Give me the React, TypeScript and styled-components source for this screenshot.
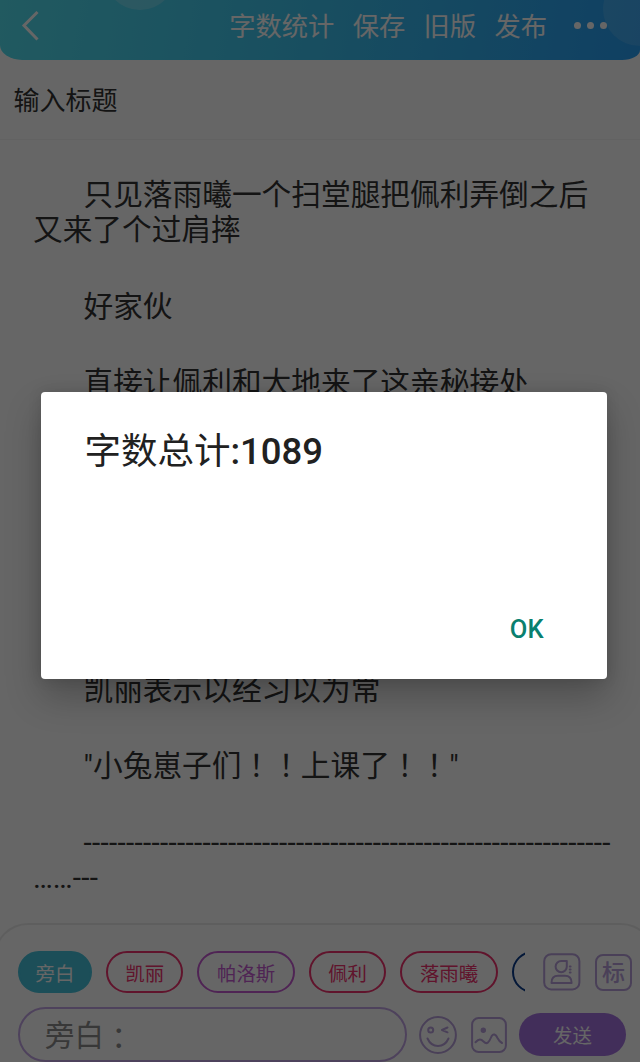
import React from "react";
import styled, { createGlobalStyle } from "styled-components";

const GlobalStyle = createGlobalStyle`
  * {
    box-sizing: border-box;
  }
  body {
    margin: 0;
    background-color: #666666;
    font-family: Roboto, "Noto Sans CJK SC", sans-serif;
  }
`;

const roles = [
  { name: "旁白", width: 74, color: "#46c2dc", active: true },
  { name: "凯丽", width: 77.4, color: "#f0326e" },
  { name: "帕洛斯", width: 97.5, color: "#c55ad2" },
  { name: "佩利", width: 77.4, color: "#f0326e" },
  { name: "落雨曦", width: 97.5, color: "#f0326e" },
  { name: "", width: 97.5, color: "#0a3c8c" },
];

const App = () => {
  return (
    <Screen>
      <GlobalStyle />
      <Header>
        <Bubble $left={104} $top={-62} $size={72} $opacity={0.2} />
        <Bubble $left={603} $top={-28} $size={74} $opacity={0.12} />
        <BackIcon viewBox="0 0 20 32">
          <path d="M16.5 2 L3 15.5 L16.5 29.5" />
        </BackIcon>
        <Menu>
          <span>字数统计</span>
          <span>保存</span>
          <span>旧版</span>
          <span>发布</span>
        </Menu>
        <Dots>
          <Dot />
          <Dot />
          <Dot />
        </Dots>
      </Header>
      <TitleRow>输入标题</TitleRow>
      <Article>
        <Paragraph>只见落雨曦一个扫堂腿把佩利弄倒之后又来了个过肩摔</Paragraph>
        <Paragraph>好家伙</Paragraph>
        <Paragraph>直接让佩利和大地来了这亲秘接处</Paragraph>
        <Paragraph />
        <Paragraph />
        <Paragraph />
        <Paragraph>凯丽表示以经习以为常</Paragraph>
        <Paragraph>
          "小兔崽子们<Wide>！！</Wide>上课了<Wide>！！</Wide>"
        </Paragraph>
        <Paragraph>
          <Dashes>{"-".repeat(62)}</Dashes>
          <br />
          ……<Dashes>---</Dashes>
        </Paragraph>
      </Article>
      <Panel>
        <RoleRow>
          <RoleList>
            {roles.map((role, index) => (
              <Role
                key={index}
                $width={role.width}
                $color={role.color}
                $active={role.active}
              >
                {role.name}
              </Role>
            ))}
          </RoleList>
          <PersonIcon viewBox="0 0 38 38">
            <rect x="1.2" y="1.2" width="35.2" height="35.2" rx="7" />
            <path d="M18.5 8 H23.8 V13.5 A5.6 5.6 0 1 1 18.5 8 Z" />
            <path d="M8.5 30 C8.3 25 11 22.8 15 22.8 H22 C26 22.8 28.8 25 28.6 30 Z" />
            <path d="M26.8 13.5 H27.6 M26.8 16.5 H27.6 M26.8 19.5 H27.6" />
          </PersonIcon>
          <MarkButton>标</MarkButton>
        </RoleRow>
        <InputRow>
          <Input>
            旁白<Wide>：</Wide>
          </Input>
          <FaceIcon viewBox="0 0 38 38">
            <circle cx="19" cy="19" r="17.9" />
            <circle cx="11.7" cy="14" r="2.5" />
            <path d="M28.5 11.5 L23 14 L28.5 16.3" />
            <path d="M8.5 22.5 C13 32.5 25 32.5 29.5 22.5" />
          </FaceIcon>
          <PictureIcon viewBox="0 0 36 36">
            <rect x="1.1" y="1.1" width="33.8" height="33.8" rx="6.5" />
            <circle className="sun" cx="12.3" cy="13.2" r="1.7" />
            <path d="M4.5 25.3 C8 21.5 10 22 12.5 24.5 C16 28 18 25.5 20 20.5 C22 15.5 25 17.5 26.5 21 C28 24 29 25 31 26" />
          </PictureIcon>
          <Send>发送</Send>
        </InputRow>
      </Panel>
      <Scrim>
        <Dialog>
          <DialogTitle>
            字数总计<Count>:1089</Count>
          </DialogTitle>
          <DialogButton>OK</DialogButton>
        </Dialog>
      </Scrim>
    </Screen>
  );
};

export default App;

const Screen = styled.div`
  position: relative;
  display: flex;
  flex-direction: column;
  width: 640px;
  height: 1062px;
  overflow: hidden;
  background-color: #ffffff;
`;

const Header = styled.div`
  position: relative;
  display: flex;
  align-items: center;
  flex: none;
  height: 59.5px;
  padding: 0 33px 8.5px 21px;
  overflow: hidden;
  border-radius: 0 0 18px 22px / 0 0 10px 15px;
  background: linear-gradient(100deg, #58e6f0 -10%, #3fc6f0 45%, #269cf6 105%);
`;

const Bubble = styled.div<{
  $left: number;
  $top: number;
  $size: number;
  $opacity: number;
}>`
  position: absolute;
  left: ${({ $left }) => $left}px;
  top: ${({ $top }) => $top}px;
  width: ${({ $size }) => $size}px;
  height: ${({ $size }) => $size}px;
  border-radius: 50%;
  background-color: rgba(255, 255, 255, ${({ $opacity }) => $opacity});
`;

const BackIcon = styled.svg`
  width: 20px;
  height: 32px;
  fill: none;
  stroke: #ffffff;
  stroke-width: 3;
`;

const Menu = styled.div`
  display: flex;
  gap: 18.3px;
  margin-left: auto;
  padding-top: 2px;
  font-size: 26.3px;
  line-height: 36px;
  color: #ffffff;
`;

const Dots = styled.div`
  display: flex;
  gap: 6px;
  margin-left: 27px;
`;

const Dot = styled.span`
  width: 7px;
  height: 7px;
  border-radius: 50%;
  background-color: #ffffff;
`;

const TitleRow = styled.div`
  display: flex;
  align-items: center;
  flex: none;
  height: 80.5px;
  padding: 0 0 2px 13.5px;
  border-bottom: 1px solid #f5f5f5;
  font-size: 26px;
  color: #333333;
`;

const Article = styled.div`
  height: 783px;
  flex: none;
  padding: 38.3px 29px 0 33px;
  overflow: hidden;
  font-size: 29.7px;
  line-height: 34.7px;
  color: #333333;
`;

const Paragraph = styled.p`
  min-height: 34.7px;
  margin: 0 0 41.95px;
  text-indent: 50.5px;
`;

const Wide = styled.span`
  font-family: "Noto Sans CJK JP", sans-serif;
  line-height: 0;
`;

const Dashes = styled.span`
  letter-spacing: 0.3px;
  white-space: nowrap;
`;

/* the panel runs a little past both sides, so only its top edge is seen */
const Panel = styled.div`
  display: flex;
  flex-direction: column;
  flex: none;
  gap: 14px;
  height: 139px;
  margin: 0 -15px 0 -6px;
  padding: 26px 22px 0 22px;
  border: 2px solid #ececec;
  border-bottom: none;
  border-radius: 34px 34px 0 0;
`;

const RoleRow = styled.div`
  display: flex;
  align-items: center;
  height: 42px;
  margin-right: -2px;
`;

const RoleList = styled.div`
  display: flex;
  gap: 14px;
  width: 507px;
  margin-right: 18px;
  overflow: hidden;
`;

const Role = styled.div<{ $width: number; $color: string; $active?: boolean }>`
  display: flex;
  align-items: center;
  justify-content: center;
  flex: none;
  width: ${({ $width }) => $width}px;
  height: 42px;
  border: 2px solid ${({ $color }) => $color};
  border-radius: 21px;
  background-color: ${({ $color, $active }) => ($active ? $color : "transparent")};
  color: ${({ $color, $active }) => ($active ? "#ffffff" : $color)};
  font-size: 19.4px;
`;

const LineIcon = styled.svg`
  flex: none;
  fill: none;
  stroke: #b8a0dc;
  stroke-width: 2;
  stroke-linecap: round;
  stroke-linejoin: round;
`;

const PersonIcon = styled(LineIcon)`
  width: 38px;
  height: 38px;
`;

const MarkButton = styled.div`
  display: flex;
  align-items: center;
  justify-content: center;
  width: 37px;
  height: 37px;
  margin-left: 14px;
  padding-bottom: 2px;
  border: 2px solid #b8a0dc;
  border-radius: 8px;
  font-size: 23px;
  font-weight: 500;
  color: #b8a0dc;
`;

const InputRow = styled.div`
  display: flex;
  align-items: center;
  height: 55px;
`;

const Input = styled.div`
  display: flex;
  align-items: center;
  width: 389px;
  height: 55px;
  padding: 3px 0 0 25px;
  border: 2px solid #c3a5e6;
  border-radius: 28px;
  font-size: 29.5px;
  line-height: 40px;
  color: #8c8c8c;
`;

const FaceIcon = styled(LineIcon)`
  width: 38px;
  height: 38px;
  margin-left: 12px;
`;

const PictureIcon = styled(LineIcon)`
  width: 36px;
  height: 36px;
  margin-left: 14px;

  .sun {
    fill: #b8a0dc;
  }
`;

const Send = styled.div`
  display: flex;
  align-items: center;
  justify-content: center;
  width: 107px;
  height: 43px;
  margin-left: 12px;
  border-radius: 22px;
  background-color: #a573e1;
  font-size: 19.4px;
  color: #ffffff;
`;

const Scrim = styled.div`
  position: absolute;
  inset: 0;
  padding: 392px 33.5px 0 40.5px;
  background-color: rgba(0, 0, 0, 0.6);
`;

const Dialog = styled.div`
  display: flex;
  flex-direction: column;
  justify-content: space-between;
  height: 287px;
  padding: 38px 63px 32px 44px;
  border-radius: 4px;
  background-color: #ffffff;
  box-shadow: 0 18px 36px rgba(0, 0, 0, 0.24), 0 0 14px rgba(0, 0, 0, 0.12);
`;

const DialogTitle = styled.div`
  font-size: 36.5px;
  line-height: 44px;
  color: #212121;
`;

const Count = styled.span`
  font-weight: 500;
`;

const DialogButton = styled.div`
  align-self: flex-end;
  font-size: 25.5px;
  font-weight: 500;
  line-height: 36px;
  color: #0a806f;
`;
